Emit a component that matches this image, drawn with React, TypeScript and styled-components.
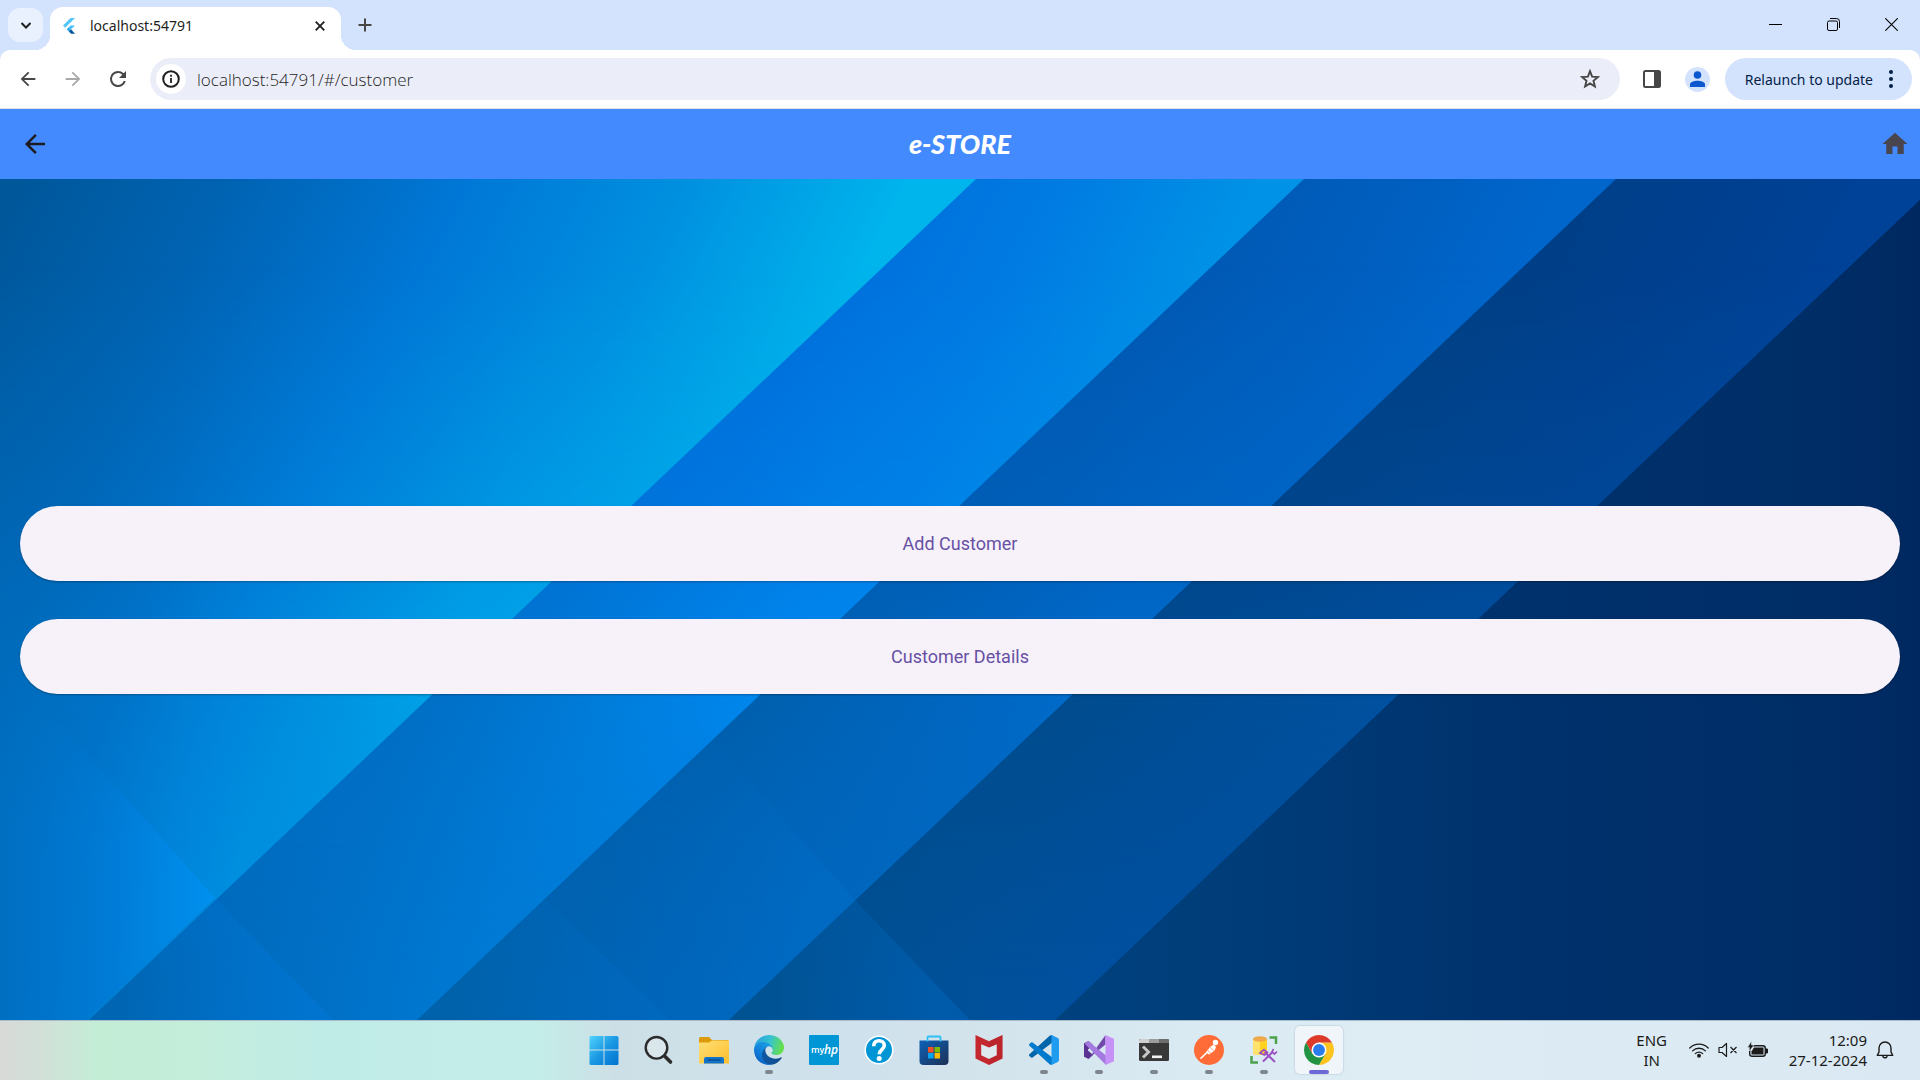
import React from "react";
import styled, { createGlobalStyle } from "styled-components";

const GlobalStyle = createGlobalStyle`
  *, *::before, *::after { box-sizing: border-box; }
  body { margin: 0; font-family: "Noto Sans", "Open Sans", sans-serif; }
  button, input { font: inherit; color: inherit; margin: 0; }
  svg { display: block; flex: none; }
`;

const Screen = styled.div`
  min-height: 100vh;
  display: flex;
  flex-direction: column;
`;

const PlainButton = styled.button`
  display: flex;
  align-items: center;
  justify-content: center;
  padding: 0;
  border: 0;
  background: none;
  cursor: pointer;
`;

/* ---------- browser frame ---------- */

const TabStrip = styled.header`
  display: flex;
  align-items: flex-end;
  height: 50px;
  padding-left: 8px;
  background: #d3e2fd;
`;

const TabSearch = styled(PlainButton)`
  align-self: center;
  width: 35px;
  height: 34px;
  margin-right: 7px;
  border-radius: 12px;
  background: #eaf1fe;
`;

const Tab = styled.div`
  position: relative;
  display: flex;
  align-items: center;
  width: 291px;
  height: 43px;
  padding: 0 12px 6px 12px;
  border-radius: 13px 13px 0 0;
  background: #fff;
  font-size: 14px;
  color: #1f1f1f;

  &::before, &::after {
    content: "";
    position: absolute;
    bottom: 0;
    width: 15px;
    height: 15px;
  }
  &::before {
    right: 100%;
    background: radial-gradient(circle at 0 0, transparent 15px, #fff 15px);
  }
  &::after {
    left: 100%;
    background: radial-gradient(circle at 100% 0, transparent 15px, #fff 15px);
  }
`;

const TabTitle = styled.span`
  flex: 1;
  padding-left: 12px;
`;

const TabClose = styled(PlainButton)`
  width: 18px;
  height: 18px;
`;

const NewTab = styled(PlainButton)`
  align-self: center;
  width: 30px;
  height: 30px;
  margin-left: 9px;
`;

const WindowControls = styled.div`
  display: flex;
  align-self: stretch;
  margin-left: auto;
`;

const WindowButton = styled(PlainButton)`
  width: 58px;
  height: 48px;
`;

const ToolbarBack = styled.div`
  background: #d3e2fd;
`;

const Toolbar = styled.nav`
  display: flex;
  align-items: center;
  height: 59px;
  padding: 0 8px 0 5px;
  border-radius: 10px 10px 0 0;
  border-bottom: 1px solid #dfe1e3;
  background: #fff;
`;

const ToolButton = styled(PlainButton)`
  width: 45px;
  height: 42px;
`;

const AddressBar = styled.label`
  flex: 1;
  display: flex;
  align-items: center;
  height: 42px;
  margin: 0 10px;
  padding: 0 20px 0 6px;
  border-radius: 21px;
  background: #ebeef8;
`;

const SiteInfo = styled(PlainButton)`
  width: 30px;
  height: 30px;
  border-radius: 50%;
  background: #fff;
`;

const AddressInput = styled.input`
  flex: 1;
  min-width: 0;
  height: 32px;
  padding: 0 11px;
  border: 0;
  outline: 0;
  background: none;
  font-family: "Open Sans", "Noto Sans", sans-serif;
  font-size: 17px;
  font-weight: 300;
  color: #1f1f1f;
`;

const Avatar = styled(PlainButton)`
  width: 25px;
  height: 25px;
  margin: 0 15px 0 10px;
  border-radius: 50%;
  background: #d3e2fd;
`;

const Relaunch = styled(PlainButton)`
  gap: 16px;
  height: 42px;
  padding: 0 19px 0 20px;
  border-radius: 21px;
  background: #d3e2fd;
  color: #041e49;
  font-size: 14px;
`;

/* ---------- app ---------- */

const AppBar = styled.header`
  display: grid;
  grid-template-columns: 1fr auto 1fr;
  align-items: center;
  height: 70px;
  padding: 0 10px;
  background: #448aff;
`;

const AppTitle = styled.h1`
  margin: 0;
  font-family: Lato, "Open Sans", sans-serif;
  font-size: 27px;
  font-style: italic;
  font-weight: 900;
  line-height: 36px;
  color: #fff;
`;

const HomeButton = styled(PlainButton)`
  justify-self: end;
`;

const BackButton = styled(PlainButton)`
  justify-self: start;
  padding-left: 15px;
`;

const Main = styled.main`
  flex: 1;
  display: grid;
  overflow: hidden;
`;

const Wallpaper = styled.svg`
  grid-area: 1 / 1;
  width: 100%;
  height: 100%;
  min-height: 0;
`;

const Actions = styled.div`
  grid-area: 1 / 1;
  position: relative;
  display: flex;
  flex-direction: column;
  justify-content: center;
  gap: 38px;
  padding: 0 20px;
`;

const ActionButton = styled.button`
  height: 75px;
  border: 0;
  border-radius: 38px;
  background: #f7f2fa;
  box-shadow: 0 1px 2px rgba(0, 0, 0, 0.3);
  font-family: Roboto, sans-serif;
  font-size: 18px;
  color: #6750a4;
  cursor: pointer;
`;

/* ---------- taskbar ---------- */

const Taskbar = styled.footer`
  display: grid;
  grid-template-columns: 1fr auto 1fr;
  align-items: center;
  height: 60px;
  padding: 0 0 1px 2px;
  border-top: 1px solid #a9bccb;
  background: linear-gradient(90deg, #d8dad8 0%, #d2dfd8 2%, #c4edd6 5%, #c4edda 10%, #c0ece8 17%, #c3ede8 28%, #cddfe6 32%, #cfe1ec 45%, #d4e4ec 52%, #d9e9f2 60%, #deedf4 72%, #d9e8f2 100%);
`;

const Apps = styled.div`
  grid-column: 2;
  display: flex;
  gap: 7px;
`;

type Running = "none" | "open" | "active";

const AppButton = styled(PlainButton)<{ $state: Running }>`
  position: relative;
  width: 48px;
  height: 48px;
  border-radius: 5px;
  background: ${(p) => (p.$state === "active" ? "#eff5f9" : "none")};
  box-shadow: ${(p) => (p.$state === "active" ? "0 0 1px 1px rgba(160,180,195,0.3)" : "none")};

  &::after {
    content: "";
    display: ${(p) => (p.$state === "none" ? "none" : "block")};
    position: absolute;
    bottom: 0;
    width: ${(p) => (p.$state === "active" ? "20px" : "8px")};
    height: 4px;
    border-radius: 2px;
    background: ${(p) => (p.$state === "active" ? "#6b69d6" : "#7c868c")};
  }
`;

const Tray = styled.div`
  justify-self: end;
  display: flex;
  align-items: center;
  padding-right: 26px;
  font-size: 15px;
  line-height: 20px;
  color: #1b1b1b;
`;

const Language = styled(PlainButton)`
  width: 36px;
  margin-right: 19px;
  line-height: 20px;
`;

const QuickSettings = styled(PlainButton)`
  gap: 9px;
  margin-right: 20px;
`;

const Clock = styled(PlainButton)`
  margin-right: 9px;
  text-align: right;
  line-height: 20px;
`;

/* Bands run down-left: an x on the top edge lands 887 further left at the bottom. */
const BOTTOM = 841;
const SHIFT = 887;

type Ramp = { id: string; x1: number; x2: number; colors: string[] };
type Layer = { name: string; slant: number; y: number; mask?: string; ramps: Ramp[] };

const edges = [
  [-1000, 977],
  [976, 1305],
  [1304, 1617],
  [1616, 1942],
];

/* Each layer colours the bands as they look around height y; lower layers fade in over upper ones. */
const layers: Layer[] = [
  {
    name: "top",
    slant: 0.5,
    y: 160,
    ramps: [
      { id: "t0", x1: -60, x2: 830, colors: ["#00579a", "#0064b4", "#0077d6", "#0090e0", "#00b4ec"] },
      { id: "t1", x1: 800, x2: 1180, colors: ["#006fdc", "#007ce2", "#0092e6"] },
      { id: "t2", x1: 1130, x2: 1490, colors: ["#0058b2", "#005ebe", "#0066cc"] },
      { id: "t3", x1: 1447, x2: 1800, colors: ["#003f84", "#003f8e", "#004298"] },
    ],
  },
  {
    name: "mid",
    slant: 0.3,
    y: 525,
    mask: "maskMid",
    ramps: [
      { id: "m0", x1: 0, x2: 440, colors: ["#006cbc", "#0073c8", "#0084da", "#0093e0", "#00a2e8"] },
      { id: "m1", x1: 400, x2: 759, colors: ["#006ec4", "#0076d0", "#0080e0", "#0087ee"] },
      { id: "m2", x1: 740, x2: 1072, colors: ["#0060ae", "#0065bc", "#006bca"] },
      { id: "m3", x1: 1060, x2: 1397, colors: ["#004c8e", "#004e98", "#0051a0"] },
    ],
  },
  {
    name: "low",
    slant: 0.15,
    y: 841,
    mask: "maskLow",
    ramps: [
      { id: "l0", x1: 0, x2: 215, colors: ["#006fc0", "#007ed4", "#008fe0"] },
      { id: "l1", x1: 120, x2: 480, colors: ["#0066b4", "#006fc4", "#007ad4"] },
      { id: "l2", x1: 440, x2: 800, colors: ["#0062aa", "#0064b6", "#0067be"] },
      { id: "l3", x1: 760, x2: 1100, colors: ["#00508e", "#005098", "#0050a0"] },
    ],
  },
];

const bandPoints = ([from, to]: number[]) =>
  `${from},0 ${to},0 ${to - SHIFT},${BOTTOM} ${from - SHIFT},${BOTTOM}`;

const LayerRamp = ({ ramp, slant, y }: { ramp: Ramp; slant: number; y: number }) => {
  const t = (ramp.x2 - ramp.x1) / (1 + slant * slant);
  return (
    <linearGradient id={ramp.id} gradientUnits="userSpaceOnUse" x1={ramp.x1} y1={y} x2={ramp.x1 + t} y2={y + slant * t}>
      {ramp.colors.map((c, i) => (
        <stop key={i} offset={i / (ramp.colors.length - 1)} stopColor={c} />
      ))}
    </linearGradient>
  );
};

const FoldLight = ({ id, x1, x2, opacity }: { id: string; x1: number; x2: number; opacity: number }) => (
  <linearGradient id={id} gradientUnits="userSpaceOnUse" x1={x1} y1="0" x2={x2} y2="0">
    <stop offset="0" stopColor="#0078d8" stopOpacity="0" />
    <stop offset="1" stopColor="#0078d8" stopOpacity={opacity} />
  </linearGradient>
);

const Background = () => (
  <Wallpaper viewBox="0 0 1920 841" preserveAspectRatio="none" aria-hidden="true" height="1">
    <defs>
      <linearGradient id="fadeMid" x1="0" y1="0" x2="0" y2="1">
        <stop offset="0.1" stopColor="#000" />
        <stop offset="0.38" stopColor="#666" />
        <stop offset="0.62" stopColor="#fff" />
      </linearGradient>
      <linearGradient id="fadeLow" x1="0" y1="0" x2="0" y2="1">
        <stop offset="0.62" stopColor="#000" />
        <stop offset="0.95" stopColor="#fff" />
      </linearGradient>
      <linearGradient id="fadeCorner" x1="0" y1="0" x2="0" y2="1">
        <stop offset="0.6" stopColor="#000" />
        <stop offset="0.78" stopColor="#fff" />
      </linearGradient>
      <mask id="maskMid" maskUnits="userSpaceOnUse" x="-1900" y="0" width="3900" height="841">
        <rect x="-1900" width="3900" height="841" fill="url(#fadeMid)" />
      </mask>
      <mask id="maskLow" maskUnits="userSpaceOnUse" x="-1900" y="0" width="3900" height="841">
        <rect x="-1900" width="3900" height="841" fill="url(#fadeLow)" />
      </mask>
      <mask id="maskCorner" maskUnits="userSpaceOnUse" x="0" y="0" width="1920" height="841">
        <rect width="1920" height="841" fill="url(#fadeCorner)" />
      </mask>
      <linearGradient id="navy" gradientUnits="userSpaceOnUse" x1="1054" y1="0" x2="1920" y2="0">
        <stop offset="0" stopColor="#00427e" />
        <stop offset="0.3" stopColor="#003a76" />
        <stop offset="0.55" stopColor="#00316c" />
        <stop offset="0.9" stopColor="#002d66" />
        <stop offset="1" stopColor="#002860" />
      </linearGradient>
      <linearGradient id="corner" gradientUnits="userSpaceOnUse" x1="0" y1="0" x2="215" y2="0">
        <stop offset="0" stopColor="#006fc2" />
        <stop offset="0.5" stopColor="#007bd6" />
        <stop offset="1" stopColor="#0091f0" />
      </linearGradient>
      <FoldLight id="foldA" x1={120} x2={320} opacity={0.55} />
      <FoldLight id="foldB" x1={600} x2={850} opacity={0.22} />
      <FoldLight id="foldC" x1={440} x2={650} opacity={0.2} />
      <FoldLight id="foldD" x1={680} x2={940} opacity={0.28} />
      {layers.map((l) => l.ramps.map((r) => <LayerRamp key={r.id} ramp={r} slant={l.slant} y={l.y} />))}
    </defs>
    <rect width="1920" height="841" fill="url(#navy)" />
    {layers.map((l) => (
      <g key={l.name} mask={l.mask ? `url(#${l.mask})` : undefined}>
        {l.ramps.map((r, i) => (
          <polygon key={r.id} points={bandPoints(edges[i])} fill={`url(#${r.id})`} />
        ))}
      </g>
    ))}
    <g mask="url(#maskCorner)">
      <polygon points="0,478 215,719 86,841 0,841" fill="url(#corner)" opacity="0.9" />
      <polygon points="215,719 333,841 86,841" fill="url(#foldA)" />
      <polygon points="686,530 853,719 727,841 670,841 545,720 686,586" fill="url(#foldB)" />
      <polygon points="545,720 670,841 416,841" fill="url(#foldC)" />
      <polygon points="853,719 970,841 725,841" fill="url(#foldD)" />
    </g>
  </Wallpaper>
);

/* ---------- icons ---------- */

const Stroke = ({ size, d, color = "#474747", width = 2, box = 24 }: { size: number; d: string; color?: string; width?: number; box?: number }) => (
  <svg width={size} height={size} viewBox={`0 0 ${box} ${box}`} fill="none" stroke={color} strokeWidth={width}>
    <path d={d} />
  </svg>
);

const Fill = ({ size, d, color = "#474747" }: { size: number; d: string; color?: string }) => (
  <svg width={size} height={size} viewBox="0 0 24 24" fill={color}>
    <path d={d} />
  </svg>
);

const ARROW_BACK = "M20 11H7.83l5.59-5.59L12 4l-8 8 8 8 1.41-1.41L7.83 13H20v-2z";
const ARROW_FORWARD = "M12 4l-1.41 1.41L16.17 11H4v2h12.17l-5.58 5.59L12 20l8-8z";

const FlutterIcon = () => (
  <svg width="16" height="16" viewBox="0 0 16 16">
    <path d="M8.600 0h4.400L3.200 9.700 1 7.600z" fill="#54c5f8" />
    <path d="M8.600 7.400h4.400L9 11.300 6.800 9.300z" fill="#43c1f5" />
    <path d="M4.600 11.300l2.200-2.100L9 11.300l-2.200 2.100z" fill="#29a9ee" />
    <path d="M6.800 13.400L9 11.300l4 4.400H9z" fill="#01579b" />
  </svg>
);

const WindowsIcon = () => (
  <svg width="30" height="30" viewBox="0 0 30 30">
    <defs>
      <linearGradient id="win" x1="0" y1="0" x2="1" y2="1">
        <stop offset="0" stopColor="#4fd3fb" />
        <stop offset="0.5" stopColor="#1a98e4" />
        <stop offset="1" stopColor="#0071cf" />
      </linearGradient>
    </defs>
    <path d="M2 1h12.500v13.500H.5V2.500A1.500 1.500 0 0 1 2 1zM15.500 1H28a1.500 1.500 0 0 1 1.500 1.500v12h-14zM.5 15.500h14V30H2a1.500 1.500 0 0 1-1.500-1.500zM15.500 15.500h14v13A1.500 1.500 0 0 1 28 30H15.500z" fill="url(#win)" />
  </svg>
);

const SearchIcon = () => (
  <svg width="30" height="30" viewBox="0 0 30 30" fill="none" stroke="#2b2b2b">
    <circle cx="12.500" cy="12.800" r="10.800" strokeWidth="2.400" fill="#e6edf0" fillOpacity="0.500" />
    <path d="M20.500 21l6 6" strokeWidth="3.600" strokeLinecap="round" />
  </svg>
);

const FolderIcon = () => (
  <svg width="30" height="30" viewBox="0 0 30 30">
    <defs>
      <linearGradient id="fold1" x1="0" y1="0" x2="1" y2="1">
        <stop offset="0" stopColor="#ffdf75" />
        <stop offset="1" stopColor="#fdbf2d" />
      </linearGradient>
    </defs>
    <path d="M0 3.500A1.500 1.500 0 0 1 1.500 2H10l3 3h15.500A1.500 1.500 0 0 1 30 6.500V12H0z" fill="#dd9a0a" />
    <path d="M0 7.500h10l3-2h17v23H0z" fill="url(#fold1)" />
    <path d="M5 28.500V24a2 2 0 0 1 2-2h16a2 2 0 0 1 2 2v4.500z" fill="#1173c9" />
    <path d="M9 25h12" stroke="#0b4d90" strokeWidth="1.400" strokeLinecap="round" />
  </svg>
);

const EdgeIcon = () => (
  <svg width="30" height="30" viewBox="0 0 256 256">
    <defs>
      <linearGradient id="e1" x1="60" y1="177" x2="241" y2="177" gradientUnits="userSpaceOnUse">
        <stop offset="0" stopColor="#0c59a4" />
        <stop offset="1" stopColor="#114a8b" />
      </linearGradient>
      <linearGradient id="e2" x1="150" y1="100" x2="45" y2="230" gradientUnits="userSpaceOnUse">
        <stop offset="0" stopColor="#1b9de2" />
        <stop offset="0.500" stopColor="#1384dc" />
        <stop offset="1" stopColor="#0a64c8" />
      </linearGradient>
      <linearGradient id="e3" x1="10" y1="50" x2="240" y2="120" gradientUnits="userSpaceOnUse">
        <stop offset="0" stopColor="#2c9fdc" />
        <stop offset="0.500" stopColor="#36c2d0" />
        <stop offset="1" stopColor="#66e04b" />
      </linearGradient>
    </defs>
    <path fill="url(#e1)" d="M231 190.500c-3.400 1.800-6.900 3.400-10.500 4.700a101 101 0 0 1-35.900 6.500c-47.300 0-88.500-32.500-88.500-74.300a31.500 31.500 0 0 1 16.400-27.300c-42.800 1.800-53.800 46.400-53.800 72.500 0 73.900 68.100 81.400 82.800 81.400 7.900 0 19.800-2.300 27-4.600l1.300-.4a128.300 128.300 0 0 0 66.600-52.800 4 4 0 0 0-5.400-5.700z" />
    <path fill="url(#e2)" d="M105.700 241.400a79.200 79.200 0 0 1-22.700-21.300 80.700 80.700 0 0 1 29.500-120c3.200-1.500 8.500-4.100 15.600-4a32.400 32.400 0 0 1 25.700 13 31.900 31.900 0 0 1 6.300 18.700c0-.2 24.500-79.600-80-79.600-43.900 0-80 41.600-80 78.200a130.200 130.200 0 0 0 12.100 56 128 128 0 0 0 156.400 67 75.500 75.500 0 0 1-62.800-8z" />
    <path fill="url(#e3)" d="M152.300 148.900c-.8 1-3.300 2.500-3.300 5.600 0 2.600 1.700 5.200 4.800 7.300 14.400 10.100 41.700 8.700 41.800 8.700a59.600 59.600 0 0 0 30.300-8.300 61.400 61.400 0 0 0 30.400-52.900c.3-22.400-8-37.300-11.300-43.900C223.700 23.900 177.700 0 127.700 0A128 128 0 0 0 0 126.200c.5-36.500 36.800-66 80-66 3.500 0 23.500.3 42 10.100 16.400 8.600 25 18.900 30.900 29.200 6.200 10.700 7.300 24.200 7.300 29.600 0 5.400-2.700 13.300-7.900 19.800z" />
  </svg>
);

const HpIcon = () => (
  <svg width="30" height="30" viewBox="0 0 30 30">
    <rect width="30" height="30" rx="1" fill="#0096d6" />
    <text x="2" y="18" fontFamily="Open Sans, sans-serif" fontSize="9" fontWeight="600" fill="#fff">my</text>
    <text x="15" y="19" fontFamily="Open Sans, sans-serif" fontSize="12" fontStyle="italic" fontWeight="600" fill="#fff">hp</text>
  </svg>
);

const HelpIcon = () => (
  <svg width="30" height="30" viewBox="0 0 30 30">
    <circle cx="15" cy="15" r="13.800" fill="#0096d6" stroke="#fff" strokeWidth="1.600" />
    <path d="M9.700 11.200c0-3.500 2.200-5.500 5.300-5.500 3.200 0 5.300 2 5.300 4.800 0 4-5.100 4.300-5.100 8.700" fill="none" stroke="#fff" strokeWidth="3.600" />
    <circle cx="15.200" cy="23.400" r="2.500" fill="#fff" />
  </svg>
);

const StoreIcon = () => (
  <svg width="30" height="30" viewBox="0 0 30 30">
    <defs>
      <linearGradient id="st" x1="0" y1="0" x2="1" y2="1">
        <stop offset="0" stopColor="#0d62b8" />
        <stop offset="1" stopColor="#1c2f55" />
      </linearGradient>
    </defs>
    <path d="M.5 5.500h29V26a4 4 0 0 1-4 4h-21a4 4 0 0 1-4-4z" fill="url(#st)" />
    <path d="M8.500 6.500v-4a1 1 0 0 1 1-1h11a1 1 0 0 1 1 1v4" fill="none" stroke="#2cc0f5" strokeWidth="1.800" />
    <path d="M9 12h5.500v5.500H9z" fill="#f25022" />
    <path d="M15.500 12H21v5.500h-5.500z" fill="#7fba00" />
    <path d="M9 18h5.500v5.500H9z" fill="#00a4ef" />
    <path d="M15.500 18H21v5.500h-5.500z" fill="#ffb900" />
  </svg>
);

const McAfeeIcon = () => (
  <svg width="30" height="30" viewBox="0 0 30 30">
    <path d="M1.500 0L15 6.300 28.500 0v23.500L15 30 1.500 23.500z" fill="#c4282e" />
    <path d="M7.200 9.200L15 12.600l7.800-3.400v11L15 24l-7.800-3.800z" fill="#dde9ef" />
    <path d="M15 6.300L28.500 0v23.500L15 30v-6l7.800-3.800v-11L15 12.600z" fill="#a81a28" opacity="0.250" />
  </svg>
);

const VsCodeIcon = () => (
  <svg width="30" height="30" viewBox="0 0 100 100">
    <path d="M96 11L75.800 1.200a6 6 0 0 0-7 1.200L1.300 63.900a4 4 0 0 0 0 5.900l5.500 5a4 4 0 0 0 5.200.200L93.400 13.300c2.700-2.100 6.600-.1 6.600 3.300v-.3A6 6 0 0 0 96 11z" fill="#0065a9" />
    <path d="M96 89l-20.200 9.800a6 6 0 0 1-7-1.200L1.300 36.100a4 4 0 0 1 0-5.900l5.500-5a4 4 0 0 1 5.200-.2l81.400 61.700c2.700 2.100 6.600.1 6.600-3.300v.3A6 6 0 0 1 96 89z" fill="#007acc" />
    <path d="M75.900 98.800a6 6 0 0 1-7.100-1.200c2.300 2.300 6.200.7 6.200-2.600V5c0-3.300-3.900-4.900-6.200-2.600a6 6 0 0 1 7.100-1.200l20.600 9.900A6 6 0 0 1 100 16.600v66.800a6 6 0 0 1-3.500 5.500z" fill="#1f9cf0" />
  </svg>
);

const VisualStudioIcon = () => (
  <svg width="30" height="30" viewBox="0 0 30 30">
    <path d="M0 8.200L4.500 6 9 10l-5 4.500v1l5 4.500-4.500 4L0 21.800z" fill="#5b3192" />
    <path d="M4.500 24L21.500 0v9.500L9 19.800z" fill="#7348ad" />
    <path d="M4.500 6L9 10l13 10.500V30L.5 8.400z" fill="#a57ae0" />
    <path d="M21.500 0L30 3.700v22.600L21.500 30z" fill="#c792f7" />
  </svg>
);

const TerminalIcon = () => (
  <svg width="30" height="30" viewBox="0 0 30 30">
    <rect y="4" width="30" height="22" rx="1.500" fill="#383838" />
    <path d="M0 8V5.500A1.500 1.500 0 0 1 1.500 4H10v4z" fill="#cfcfcf" />
    <path d="M10 4h10v4H10z" fill="#9c9c9c" />
    <path d="M20 4h8.500A1.500 1.500 0 0 1 30 5.500V8H20z" fill="#6e6e6e" />
    <path d="M4 11.500l5.500 5.500L4 22.500" fill="none" stroke="#c6c6c6" strokeWidth="3" />
    <path d="M13 21.800h10" stroke="#f2f2f2" strokeWidth="2.600" />
  </svg>
);

const PostmanIcon = () => (
  <svg width="30" height="30" viewBox="0 0 30 30">
    <circle cx="15" cy="15" r="15" fill="#ff6c37" />
    <circle cx="21.500" cy="7.500" r="2.700" fill="#fff" />
    <path d="M19.500 9.500l2.500 2.200-1.500 4-5.500 3.800-3.200-2 4.200-5.500z" fill="#fff" />
    <path d="M14.500 16L7 23.200" stroke="#fff" strokeWidth="1.600" strokeLinecap="round" />
    <path d="M13 14.500l4 4M15.500 12l4.500 4" stroke="#ff6c37" strokeWidth="0.600" />
  </svg>
);

const DatabaseToolsIcon = () => (
  <svg width="30" height="30" viewBox="0 0 30 30">
    <path d="M4 4h7v16H6a2 2 0 0 1-2-2z" fill="#ffe26b" />
    <path d="M11 4h7v14a2 2 0 0 1-2 2h-5z" fill="#ffd21f" />
    <ellipse cx="11" cy="4" rx="7" ry="2.800" fill="#eda94b" />
    <path d="M20.500 2.500h6.500v6.500M2.500 21v6.500H9" fill="none" stroke="#4ba24b" strokeWidth="2.500" />
    <path d="M14 26.500l9.500-9.500M15.500 17l10.500 10" stroke="#9a4fc0" strokeWidth="2" />
    <path d="M11 18l4-3.500 3.500 3-3 2.500zM28 16.500l-2.500 2.500-2.500-2 1.500-3" fill="none" stroke="#9a4fc0" strokeWidth="1.700" />
  </svg>
);

const ChromeIcon = () => (
  <svg width="30" height="30" viewBox="0 0 48 48">
    <path d="M24 12h20.780A24 24 0 0 1 24 48L34.390 30z" fill="#fdc41f" />
    <path d="M13.610 30L3.220 12A24 24 0 0 0 24 48l10.390-18z" fill="#229342" />
    <path d="M3.220 12A24 24 0 0 1 44.780 12H24L13.610 30z" fill="#dd3a2c" />
    <circle cx="24" cy="24" r="12" fill="#fff" />
    <circle cx="24" cy="24" r="9.500" fill="#2a7cec" />
  </svg>
);

const apps: { name: string; state: Running; icon: React.ReactNode }[] = [
  { name: "Start", state: "none", icon: <WindowsIcon /> },
  { name: "Search", state: "none", icon: <SearchIcon /> },
  { name: "File Explorer", state: "none", icon: <FolderIcon /> },
  { name: "Microsoft Edge", state: "open", icon: <EdgeIcon /> },
  { name: "myHP", state: "none", icon: <HpIcon /> },
  { name: "Help", state: "none", icon: <HelpIcon /> },
  { name: "Microsoft Store", state: "none", icon: <StoreIcon /> },
  { name: "McAfee", state: "none", icon: <McAfeeIcon /> },
  { name: "Visual Studio Code", state: "open", icon: <VsCodeIcon /> },
  { name: "Visual Studio", state: "open", icon: <VisualStudioIcon /> },
  { name: "Terminal", state: "open", icon: <TerminalIcon /> },
  { name: "Postman", state: "open", icon: <PostmanIcon /> },
  { name: "Database tools", state: "open", icon: <DatabaseToolsIcon /> },
  { name: "Google Chrome", state: "active", icon: <ChromeIcon /> },
];

const WifiIcon = () => (
  <svg width="20" height="16" viewBox="0 0 20 16" fill="none" stroke="#1b1b1b" strokeWidth="1.300" strokeLinecap="round">
    <path d="M.8 6a13 13 0 0 1 18.400 0M3.600 8.900a9 9 0 0 1 12.800 0M6.300 11.600a5.200 5.200 0 0 1 7.400 0" />
    <circle cx="10" cy="13.800" r="1.300" fill="#1b1b1b" />
  </svg>
);

const VolumeIcon = () => (
  <svg width="20" height="16" viewBox="0 0 20 16" fill="none" stroke="#1b1b1b" strokeWidth="1.200" strokeLinejoin="round">
    <path d="M1 5.500h3l4.500-4v13l-4.500-4H1zM12.500 5l6 6M18.500 5l-6 6" />
  </svg>
);

const BatteryIcon = () => (
  <svg width="22" height="18" viewBox="0 0 22 18">
    <rect x="2.700" y="4.700" width="15.600" height="10.600" rx="2.500" fill="none" stroke="#1b1b1b" strokeWidth="1.400" />
    <path d="M7 6.500h9.500v7H4.500v-3z" fill="#1b1b1b" />
    <path d="M19 8h1.500v4H19z" fill="#1b1b1b" stroke="#1b1b1b" />
    <path d="M4.500 0v4H7L2.500 10V6.500H.5z" fill="#1b1b1b" stroke="#d9e8f2" strokeWidth="0.600" />
  </svg>
);

const BellIcon = () => (
  <svg width="18" height="20" viewBox="1 0 18 20" fill="none" stroke="#1b1b1b" strokeWidth="1.400" strokeLinejoin="round">
    <path d="M10 2a6 6 0 0 0-6 6v4l-1.700 3.400h15.400L16 12V8a6 6 0 0 0-6-6zM7.800 15.600a2.200 2.200 0 0 0 4.400 0" />
  </svg>
);

export default function App() {
  return (
    <Screen>
      <GlobalStyle />
      <TabStrip>
        <TabSearch aria-label="Search tabs">
          <Stroke size={12} box={12} d="M1.500 4L6 8.500 10.500 4" color="#1f1f1f" width={2} />
        </TabSearch>
        <Tab>
          <FlutterIcon />
          <TabTitle>localhost:54791</TabTitle>
          <TabClose aria-label="Close tab">
            <Stroke size={10} box={10} d="M.7.7l8.600 8.600M9.300.7L.7 9.300" color="#1f1f1f" width={1.8} />
          </TabClose>
        </Tab>
        <NewTab aria-label="New tab">
          <Stroke size={14} box={14} d="M7 .5v13M.5 7h13" width={2} />
        </NewTab>
        <WindowControls>
          <WindowButton aria-label="Minimize">
            <Stroke size={13} box={13} d="M0 6.500h13" color="#000" width={1} />
          </WindowButton>
          <WindowButton aria-label="Restore">
            <Stroke size={13} box={13} d="M2 3h7a1.500 1.500 0 0 1 1.500 1.500V11A1.500 1.500 0 0 1 9 12.500H2A1.500 1.500 0 0 1 .5 11V4.500A1.500 1.500 0 0 1 2 3zM3 .5h6.500a3 3 0 0 1 3 3V10" color="#000" width={1} />
          </WindowButton>
          <WindowButton aria-label="Close">
            <Stroke size={13} box={13} d="M.3.3l12.400 12.400M12.700.3L.3 12.700" color="#000" width={1.1} />
          </WindowButton>
        </WindowControls>
      </TabStrip>
      <ToolbarBack>
        <Toolbar aria-label="Browser toolbar">
          <ToolButton aria-label="Back"><Fill size={22} d={ARROW_BACK} /></ToolButton>
          <ToolButton aria-label="Forward" disabled><Fill size={22} d={ARROW_FORWARD} color="#a9a9a9" /></ToolButton>
          <ToolButton aria-label="Reload">
            <Fill size={24} d="M17.650 6.350A7.960 7.960 0 0 0 12 4a8 8 0 1 0 7.730 10h-2.080A6 6 0 1 1 12 6c1.660 0 3.140.69 4.220 1.780L13 11h7V4z" />
          </ToolButton>
          <AddressBar>
            <SiteInfo aria-label="Site information">
              <svg width="18" height="18" viewBox="0 0 18 18" fill="none" stroke="#1f1f1f" strokeWidth="2">
                <circle cx="9" cy="9" r="7.800" />
                <path d="M9 8v5M9 4.700v2" strokeWidth="1.800" />
              </svg>
            </SiteInfo>
            <AddressInput type="text" aria-label="Address" defaultValue="localhost:54791/#/customer" />
            <PlainButton aria-label="Bookmark this page">
              <Stroke size={20} box={20} width={1.9} d="M10 2.200l2.100 5.400 5.900.4-4.500 3.800 1.400 5.700-4.900-3.100-4.900 3.100 1.400-5.700L2 8l5.900-.4z" />
            </PlainButton>
          </AddressBar>
          <ToolButton aria-label="Side panel">
            <svg width="18" height="18" viewBox="0 0 18 18">
              <rect x="1" y="1" width="16" height="16" rx="1.500" fill="#fff" stroke="#474747" strokeWidth="2" />
              <path d="M11 1h6v16h-6z" fill="#474747" />
            </svg>
          </ToolButton>
          <Avatar aria-label="Profile">
            <svg width="15" height="16" viewBox="0 0 15 16" fill="#0b57d0">
              <circle cx="7.500" cy="4" r="3.800" />
              <path d="M0 16v-2.500C0 10.800 4 9.700 7.500 9.700s7.500 1.100 7.500 3.800V16z" />
            </svg>
          </Avatar>
          <Relaunch>
            Relaunch to update
            <svg width="4" height="18" viewBox="0 0 4 18" fill="#041e49">
              <circle cx="2" cy="2" r="2" />
              <circle cx="2" cy="9" r="2" />
              <circle cx="2" cy="16" r="2" />
            </svg>
          </Relaunch>
        </Toolbar>
      </ToolbarBack>
      <AppBar>
        <BackButton aria-label="Back to previous page">
          <svg width="20" height="20" viewBox="4 4 16 16" fill="#1d1b20"><path d={ARROW_BACK} /></svg>
        </BackButton>
        <AppTitle>e-STORE</AppTitle>
        <HomeButton aria-label="Home"><Fill size={30} d="M10 20v-6h4v6h5v-8h3L12 3 2 12h3v8z" color="#49454f" /></HomeButton>
      </AppBar>
      <Main>
        <Background />
        <Actions>
          <ActionButton>Add Customer</ActionButton>
          <ActionButton>Customer Details</ActionButton>
        </Actions>
      </Main>
      <Taskbar>
        <Apps>
          {apps.map((a) => (
            <AppButton key={a.name} aria-label={a.name} $state={a.state}>{a.icon}</AppButton>
          ))}
        </Apps>
        <Tray>
          <Language>ENG<br />IN</Language>
          <QuickSettings aria-label="Network, sound and battery">
            <WifiIcon />
            <VolumeIcon />
            <BatteryIcon />
          </QuickSettings>
          <Clock>12:09<br />27-12-2024</Clock>
          <PlainButton aria-label="Notifications"><BellIcon /></PlainButton>
        </Tray>
      </Taskbar>
    </Screen>
  );
}
